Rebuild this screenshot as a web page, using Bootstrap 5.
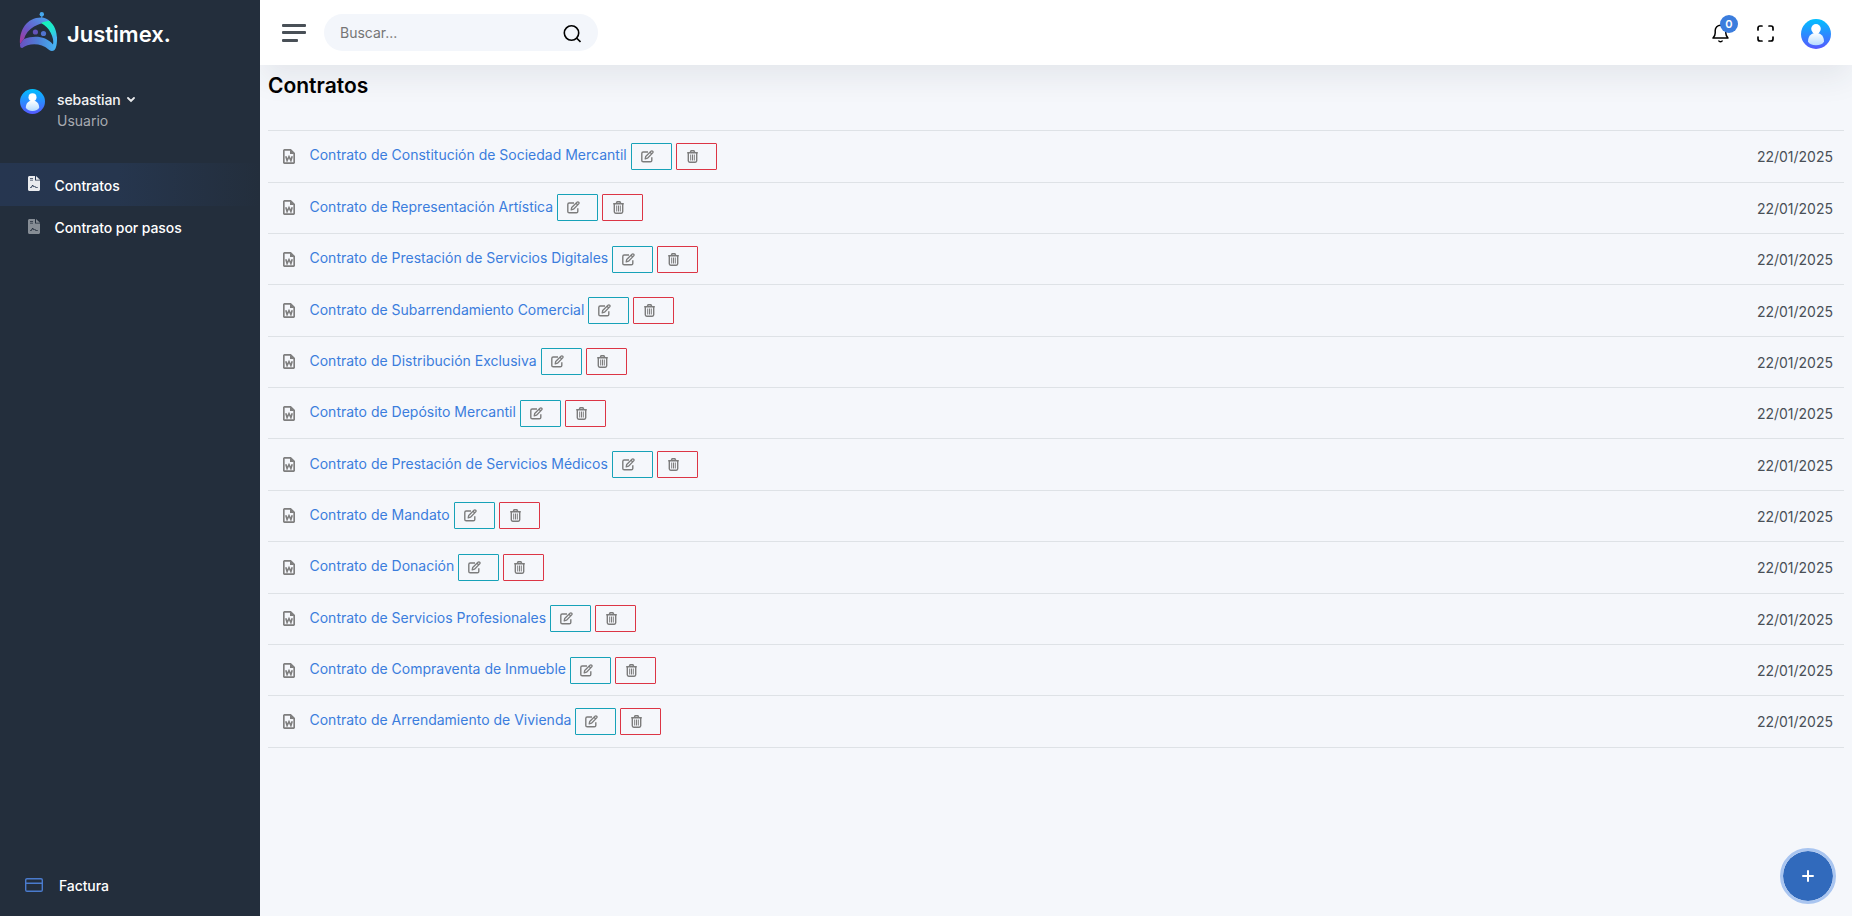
<!DOCTYPE html>
<html lang="es">
<head>
<meta charset="utf-8">
<title>Justimex - Contratos</title>
<meta name="viewport" content="width=device-width, initial-scale=1">
<link href="https://cdn.jsdelivr.net/npm/bootstrap@5.3.0/dist/css/bootstrap.min.css" rel="stylesheet">
<style>
body{font-family:Inter,"Liberation Sans",sans-serif;font-size:14px;background:#f5f7fb;color:#495057;overflow:hidden}
svg{display:block;flex:none}
.sidebar{width:260px;background:#232e3c;color:#fff}
.brand-row{padding:11px 0 0 19px;height:66px}
.brand-name{font-size:22px;font-weight:600;line-height:30px;margin:8px 0 0 10px}
.user-row{padding:23px 0 0 20px;height:97px}
.user-text{margin-left:12px;line-height:21px}
.user-name{font-weight:500;color:#f2f3f4;letter-spacing:-.13px}
.user-name svg{margin-left:6px}
.user-role{color:#a7abb1}
.side-link{height:42.5px;padding-left:28px;color:#fff;font-weight:500;text-decoration:none;letter-spacing:-.08px}
.side-link span{margin-left:14.500px;padding-top:2px}
.side-link.current{background:linear-gradient(90deg,#263650 0,#26364e 45%,#232e3c 100%)}
.side-link.current svg{margin-top:-1px}
.dim{opacity:.5}
.foot-link{height:30px;margin-bottom:16px;padding-left:25px;font-weight:500;color:#fff;text-decoration:none;letter-spacing:-.1px}
.foot-link span{margin-left:16px;padding-top:1px}
.topbar{height:65px;background:#fff;padding:0 21px 0 22px;box-shadow:0 15px 30px -2px rgba(35,46,60,.08);clip-path:inset(0 0 -60px 0);z-index:2}
.search{width:274px;height:37px;background:#f3f6fb;margin-left:18px;padding:0 17px 0 16px;margin-top:-1px}
.search input{width:180px;background:none;border:0;outline:0;padding:0;color:#757575;font-size:14px}
.search input::placeholder{color:#757575;opacity:1}
.count{top:-9px;left:8px;width:18px;height:18px;background:#3b7ddd;color:#fff;font-size:11px;font-weight:600;line-height:18px}
.tools{padding-top:2px}
.expand{margin:0 27px 0 28px}
.content-area{padding:0 8px}
h1{font-size:21px;font-weight:600;color:#000;line-height:26px;margin:8px 0 31.300px}
.docs{border-top:1px solid #dee2e6}
.doc{height:51.36px;border-bottom:1px solid #dee2e6;padding:0 11px 0 15px}
.doc a{color:#3b7ddd;text-decoration:none;font-size:14px;line-height:20px;margin:-2px 4px 0 14.500px}
.doc .date{font-size:14px;margin-top:1px}
.act{width:41px;height:27px;border:1px solid #17a2b8;border-radius:1px;background:none;padding:0 0 0 9px;margin-right:4px;color:#7c7c7c}
.act.del{border-color:#dc3545;padding-left:10px}
.fab{right:16px;bottom:12px;width:56px;height:56px;border:3px solid #a9c5f0;background:#316abc;background-clip:padding-box}
</style>
</head>
<body>
<svg width="0" height="0" class="position-absolute">
<defs>
<linearGradient id="av" x2="0" y2="1"><stop stop-color="#00c0ff"/><stop offset="1" stop-color="#5558ff"/></linearGradient>
<linearGradient id="avb" x2="0" y2="1"><stop stop-color="#fff"/><stop offset="1" stop-color="#b5dbff"/></linearGradient>
<linearGradient id="lg1" x1="0" y1="1" x2="1" y2="0"><stop stop-color="#b03494"/><stop offset=".4" stop-color="#6a58c8"/><stop offset="1" stop-color="#46a8f0"/></linearGradient>
<linearGradient id="lg2" x2="1"><stop stop-color="#6b4fc0"/><stop offset=".5" stop-color="#4d80d8"/><stop offset="1" stop-color="#45b8f5"/></linearGradient>
<linearGradient id="lg3" x2=".5" y2="1"><stop stop-color="#14f5b0"/><stop offset=".5" stop-color="#1fe6d0"/><stop offset="1" stop-color="#48b0f5"/></linearGradient>
<symbol id="avatar" viewBox="0 0 30 30"><circle cx="15" cy="15" r="15" fill="url(#av)"/><circle cx="15" cy="9.800" r="4.800" fill="#fff"/><path d="M7 22.500c0-5 3.200-8.700 8-8.700s8 3.700 8 8.700c-1 2.500-4 3.800-8 3.800s-7-1.300-8-3.800z" fill="url(#avb)"/></symbol>
<symbol id="signed" viewBox="0 0 12 15"><path fill="currentColor" fill-rule="evenodd" d="M1.500 0H7v4.500h5v9c0 .8-.7 1.500-1.500 1.500h-9C.7 15 0 14.300 0 13.500v-12C0 .7.700 0 1.500 0zM8 0l4 3.700H8zM2 2v.8h3V2zm0 1.800v.8h3v-.8zM2 11.700h1.600l1.100-1.800 1.200 1.400.8-.5.800.9H9.800v-.8H8l-1-1-.9.600-1-1.600h-.8L3 11H2z"/></symbol>
<symbol id="word" viewBox="0 0 12 15"><path d="M1.800.8h5.700L11.200 4.500v8.700a1 1 0 0 1-1 1H1.800a1 1 0 0 1-1-1V1.800a1 1 0 0 1 1-1z" fill="none" stroke="#7e7e7e" stroke-width="1.700"/><path d="M7 .7v4.300h4.300z" fill="#7e7e7e"/><path d="M2.800 7.200l1.300 4.300L6 7.500l1.900 4 1.300-4.300" fill="none" stroke="#7e7e7e" stroke-width="1.600"/></symbol>
<symbol id="edit" viewBox="0 0 13 13"><path d="M7 2H2.200A1.400 1.400 0 0 0 .8 3.400v7a1.400 1.400 0 0 0 1.400 1.400h7.200a1.400 1.400 0 0 0 1.400-1.400V7.300" fill="none" stroke="currentColor" stroke-width="1.400"/><path d="M4.200 8.800l.5-2.300L10 1.200c.5-.5 1.200-.5 1.700 0s.5 1.200 0 1.700L6.500 8.200zM9 2.200l1.800 1.800" fill="none" stroke="currentColor" stroke-width="1.300" stroke-linejoin="round"/></symbol>
<symbol id="trash" viewBox="0 0 11 13"><path d="M.2 2.700h10.600M3.200 2.500l.9-1.700h2.800l.9 1.700M1.300 3v7.800c0 .8.600 1.400 1.400 1.400h5.600c.8 0 1.400-.6 1.400-1.400V3" fill="none" stroke="currentColor" stroke-width="1.400"/><path d="M3.700 4.500v6M5.500 4.500v6M7.300 4.500v6" stroke="currentColor" stroke-width="1"/></symbol>
</defs>
</svg>
<div class="d-flex vh-100">
  <nav class="sidebar d-flex flex-column flex-shrink-0">
    <div class="brand-row d-flex align-items-start">
      <svg width="38" height="41" viewBox="0 0 38 41"><path d="M22.800 4v5" stroke="#46a8ee" stroke-width="1"/><circle cx="22.800" cy="3.200" r="2.200" fill="#46a8ee"/><path d="M1 33C0 19 8 6.500 22 6.500c4 0 7 1.500 9.500 4.500C20 11.500 8 17 5 28z" fill="url(#lg1)"/><path d="M22 12c3.500-1.600 6-2 8.500-2C35.500 14.500 38 20 38 29l-3 6c-.5-10-4-18-13-23z" fill="url(#lg3)"/><path d="M1 33c0 3 .5 4 2.200 4 6-4.500 18-6 27 2 3 2.200 5.500.5 6.500-2 1.300-3 1.300-7 1.300-11l-4-2c.7 3 .8 6 0 9.500C27 25.500 16 24 5 28z" fill="url(#lg2)"/><circle cx="16.400" cy="21" r="2.600" fill="#6353bb"/><circle cx="24.500" cy="22.500" r="2.600" fill="#5074cf"/></svg>
      <span class="brand-name">Justimex.</span>
    </div>
    <div class="user-row d-flex align-items-start">
      <svg width="25" height="25"><use href="#avatar"/></svg>
      <div class="user-text">
        <div class="user-name d-flex align-items-center">sebastian<svg width="8" height="6" viewBox="0 0 8 6"><path d="M1 1l3 3 3-3" fill="none" stroke="#e8eaec" stroke-width="1.800" stroke-linecap="round"/></svg></div>
        <div class="user-role">Usuario</div>
      </div>
    </div>
    <a class="side-link current d-flex align-items-center" href="#"><svg width="12" height="15" color="#e9ebee"><use href="#signed"/></svg><span>Contratos</span></a>
    <a class="side-link d-flex align-items-center" href="#"><svg class="dim" width="12" height="15" color="#e9ebee"><use href="#signed"/></svg><span>Contrato por pasos</span></a>
    <a class="foot-link mt-auto d-flex align-items-center" href="#"><svg width="18" height="14" viewBox="0 0 18 14"><path d="M2 .7h14a1.300 1.300 0 0 1 1.300 1.300v10a1.300 1.300 0 0 1-1.300 1.300H2A1.300 1.300 0 0 1 .7 12V2A1.300 1.300 0 0 1 2 .7zM1 5.300h16" fill="none" stroke="#4a7bcd" stroke-width="1.400"/></svg><span>Factura</span></a>
  </nav>
  <main class="flex-grow-1">
    <header class="topbar d-flex align-items-center position-relative">
      <svg width="24" height="18" viewBox="0 0 24 18" fill="#495057"><rect width="24" height="3" rx="1"/><rect y="7" width="24" height="3" rx="1"/><rect y="15" width="16" height="3" rx="1"/></svg>
      <div class="search rounded-pill d-flex align-items-center justify-content-between">
        <input type="text" placeholder="Buscar..." aria-label="Buscar">
        <svg width="18" height="18" viewBox="0 0 18 18" fill="none" stroke="#000" stroke-width="1.600" class="mt-1"><circle cx="8.500" cy="8" r="7.200"/><path d="M13.500 13l4 4"/></svg>
      </div>
      <div class="tools ms-auto d-flex align-items-center">
        <div class="position-relative">
          <svg width="17" height="19" viewBox="0 0 17 19" fill="none" stroke="#000" stroke-width="1.500"><path d="M1 14h15c-1.600-1.500-2.200-3-2.200-5V6.500a5.300 5.300 0 0 0-10.600 0V9c0 2-.6 3.500-2.200 5z" stroke-linejoin="round"/><path d="M6.500 16.500c.9 1.700 3.100 1.700 4 0"/></svg>
          <span class="count position-absolute rounded-circle text-center">0</span>
        </div>
        <svg class="expand" width="17" height="17" viewBox="0 0 17 17" fill="none" stroke="#000" stroke-width="1.700" stroke-linecap="round"><path d="M1 5V3a2 2 0 0 1 2-2h2M12 1h2a2 2 0 0 1 2 2v2M16 12v2a2 2 0 0 1-2 2h-2M5 16H3a2 2 0 0 1-2-2v-2"/></svg>
        <svg width="30" height="30"><use href="#avatar"/></svg>
      </div>
    </header>
    <section class="content-area">
      <h1>Contratos</h1>
      <div class="docs" id="docs"></div>
    </section>
  </main>
</div>
<button class="fab position-fixed rounded-circle d-flex align-items-center justify-content-center p-0" aria-label="Nuevo"><svg width="12" height="12" viewBox="0 0 12 12" stroke="#fff" stroke-width="2" stroke-linecap="round"><path d="M6 1v10M1 6h10"/></svg></button>
<script>
const names=["Constitución de Sociedad Mercantil","Representación Artística","Prestación de Servicios Digitales","Subarrendamiento Comercial","Distribución Exclusiva","Depósito Mercantil","Prestación de Servicios Médicos","Mandato","Donación","Servicios Profesionales","Compraventa de Inmueble","Arrendamiento de Vivienda"];
document.getElementById("docs").innerHTML=names.map(n=>`<div class="doc d-flex align-items-center"><svg width="12" height="15"><use href="#word"/></svg><a href="#">Contrato de ${n}</a><button class="act" aria-label="Editar"><svg width="13" height="13"><use href="#edit"/></svg></button><button class="act del" aria-label="Eliminar"><svg width="11" height="13"><use href="#trash"/></svg></button><span class="date ms-auto">22/01/2025</span></div>`).join("");
</script>
<script src="https://cdn.jsdelivr.net/npm/bootstrap@5.3.0/dist/js/bootstrap.bundle.min.js"></script>
</body>
</html>
